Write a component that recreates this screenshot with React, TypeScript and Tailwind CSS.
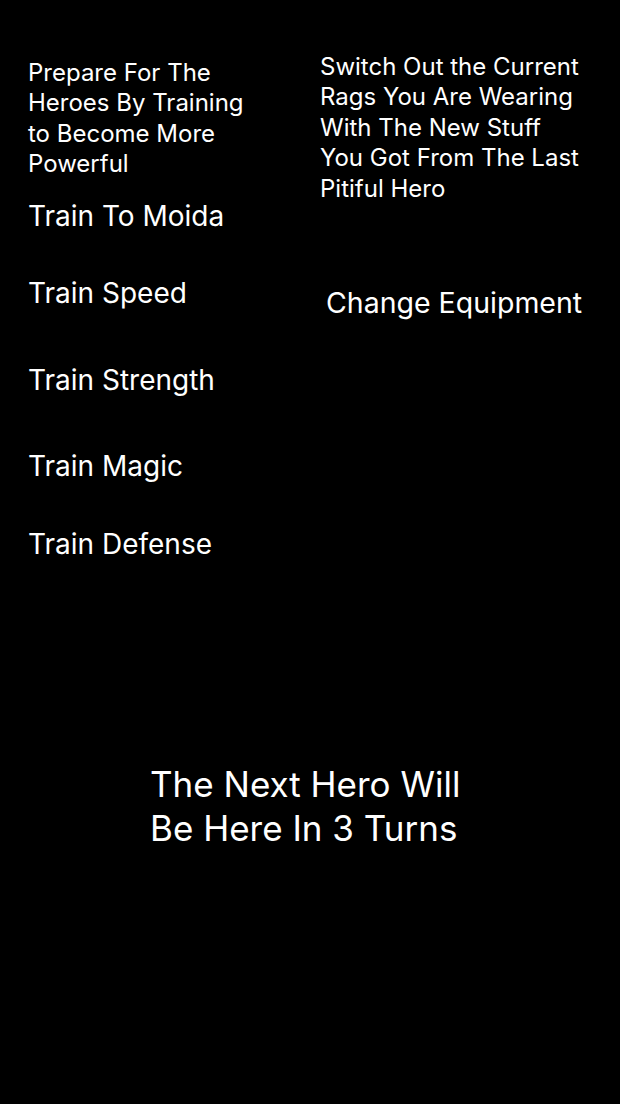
export default function App() {
  const font = { fontFamily: "Inter, 'Noto Sans', sans-serif" };
  return (
    <div className="w-[620px] h-[1104px] bg-black text-white overflow-hidden" style={font}>
      <div className="flex">
        <div className="w-[292px] pl-[28px] pt-[57.5px] flex flex-col">
          <p className="text-[24px] leading-[30.5px] w-[228px]">
            Prepare For The Heroes By Training to Become More Powerful
          </p>
          <p className="text-[28px] leading-[32px] mt-[20.5px]">Train To Moida</p>
          <p className="text-[28px] leading-[32px] mt-[45px]">Train Speed</p>
          <p className="text-[28px] leading-[32px] mt-[55px]">Train Strength</p>
          <p className="text-[28px] leading-[32px] mt-[54px]">Train Magic</p>
          <p className="text-[28px] leading-[32px] mt-[46px]">Train Defense</p>
        </div>
        <div className="flex-1 pl-[28px] pt-[52px] flex flex-col">
          <p className="text-[24px] leading-[30.4px] w-[270px]">
            Switch Out the Current Rags You Are Wearing With The New Stuff You Got From The Last Pitiful Hero
          </p>
          <p className="text-[28.5px] leading-[32px] mt-[83px] pl-[6px]">Change Equipment</p>
        </div>
      </div>
      <div className="flex justify-center mt-[202px]">
        <p className="text-[35px] leading-[44px] w-[320px]">
          The Next Hero Will Be Here In 3 Turns
        </p>
      </div>
    </div>
  );
}
